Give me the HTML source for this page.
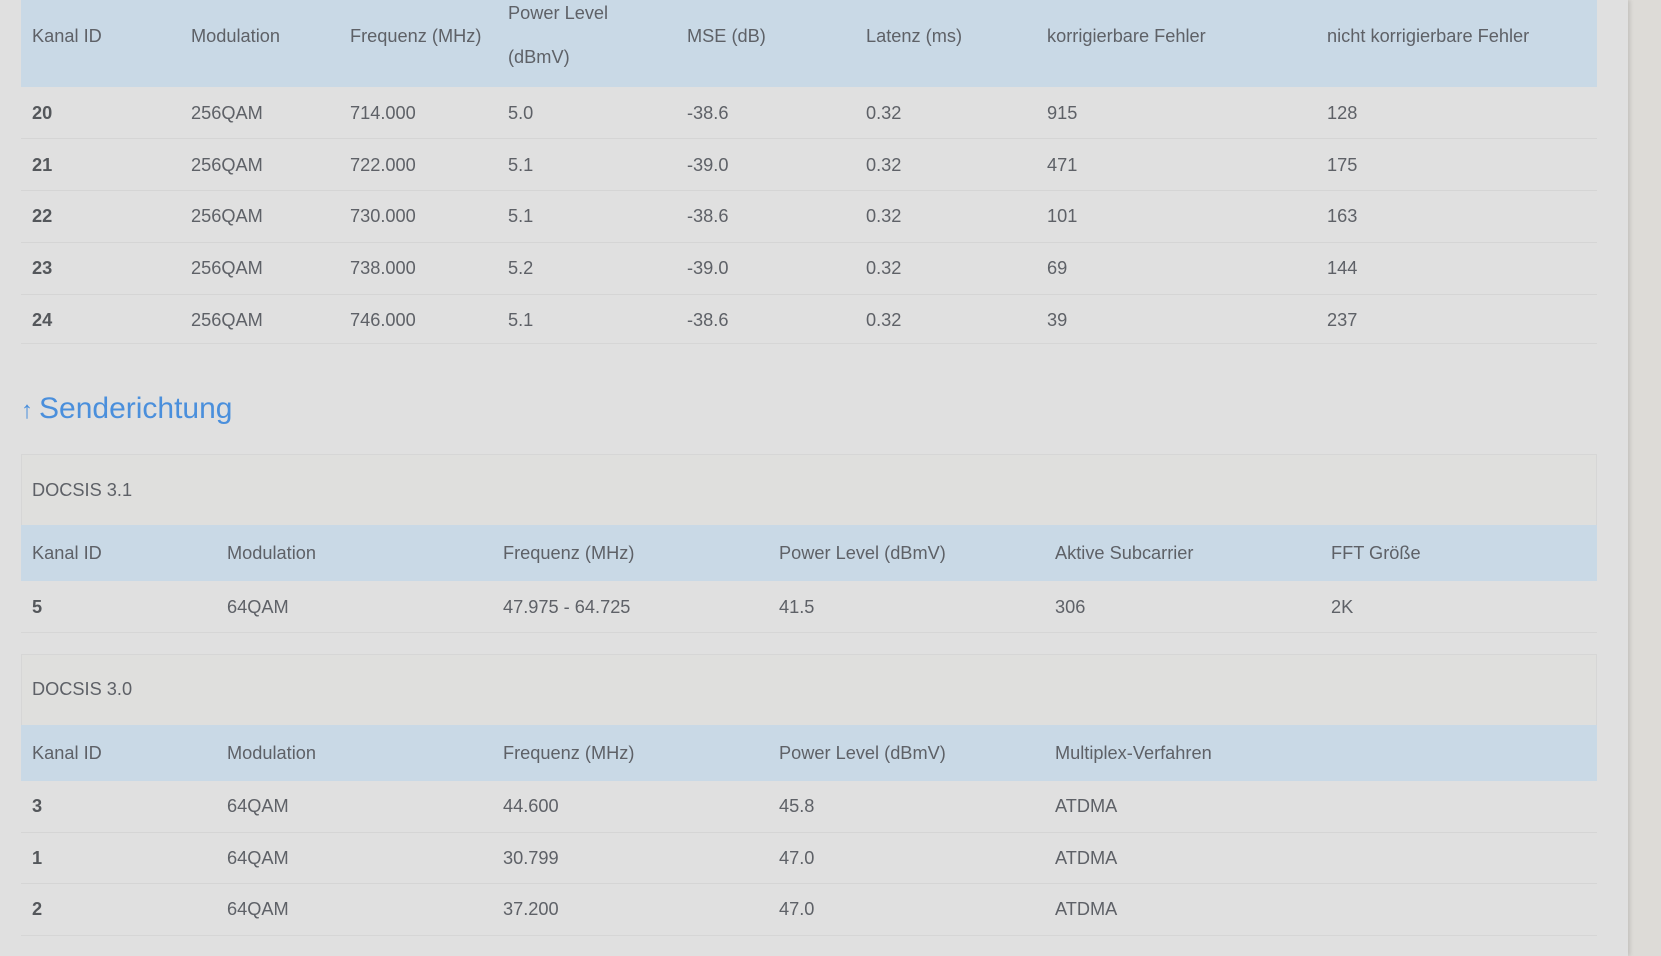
<!DOCTYPE html>
<html><head><meta charset="utf-8"><style>
*{margin:0;padding:0;box-sizing:border-box}
body{width:1661px;height:956px;overflow:hidden;background:#dddbd7;font-family:"Liberation Sans",sans-serif;color:#5e6167;font-size:18.2px;position:relative}
.panel{position:absolute;left:0;top:0;width:1628px;height:956px;background:#e0e0e0;box-shadow:2px 0 4px rgba(0,0,0,.12)}
.a{position:absolute;white-space:nowrap;line-height:20px}
.hd{position:absolute;left:21px;width:1576px;background:#c9d9e6}
.row{position:absolute;left:21px;width:1576px;border-bottom:1px solid #d5d5d5;background:#e0e0e0}
.box{position:absolute;left:21px;width:1576px;border:1px solid #d6d6d6;background:#dfdfdd}
b{font-weight:bold;color:#54575b}
</style></head><body>
<div class="panel"></div>
<div class="box" style="top:-2px;height:346px;background:#e0e0e0"></div>
<div class="hd" style="top:0;height:87px"></div>
<div class="row" style="top:87px;height:52px"></div>
<div class="row" style="top:139px;height:52px"></div>
<div class="row" style="top:191px;height:52px"></div>
<div class="row" style="top:243px;height:52px"></div>
<div class="row" style="top:295px;height:48px;border-bottom:none"></div>

<div class="a" style="left:32px;top:26px">Kanal ID</div>
<div class="a" style="left:191px;top:26px">Modulation</div>
<div class="a" style="left:350px;top:26px">Frequenz (MHz)</div>
<div class="a" style="left:508px;top:3px">Power Level</div>
<div class="a" style="left:508px;top:47px">(dBmV)</div>
<div class="a" style="left:687px;top:26px">MSE (dB)</div>
<div class="a" style="left:866px;top:26px">Latenz (ms)</div>
<div class="a" style="left:1047px;top:26px">korrigierbare Fehler</div>
<div class="a" style="left:1327px;top:26px">nicht korrigierbare Fehler</div>

<div class="a" style="left:32px;top:103px"><b>20</b></div><div class="a" style="left:191px;top:103px">256QAM</div><div class="a" style="left:350px;top:103px">714.000</div><div class="a" style="left:508px;top:103px">5.0</div><div class="a" style="left:687px;top:103px">-38.6</div><div class="a" style="left:866px;top:103px">0.32</div><div class="a" style="left:1047px;top:103px">915</div><div class="a" style="left:1327px;top:103px">128</div>
<div class="a" style="left:32px;top:155px"><b>21</b></div><div class="a" style="left:191px;top:155px">256QAM</div><div class="a" style="left:350px;top:155px">722.000</div><div class="a" style="left:508px;top:155px">5.1</div><div class="a" style="left:687px;top:155px">-39.0</div><div class="a" style="left:866px;top:155px">0.32</div><div class="a" style="left:1047px;top:155px">471</div><div class="a" style="left:1327px;top:155px">175</div>
<div class="a" style="left:32px;top:206px"><b>22</b></div><div class="a" style="left:191px;top:206px">256QAM</div><div class="a" style="left:350px;top:206px">730.000</div><div class="a" style="left:508px;top:206px">5.1</div><div class="a" style="left:687px;top:206px">-38.6</div><div class="a" style="left:866px;top:206px">0.32</div><div class="a" style="left:1047px;top:206px">101</div><div class="a" style="left:1327px;top:206px">163</div>
<div class="a" style="left:32px;top:258px"><b>23</b></div><div class="a" style="left:191px;top:258px">256QAM</div><div class="a" style="left:350px;top:258px">738.000</div><div class="a" style="left:508px;top:258px">5.2</div><div class="a" style="left:687px;top:258px">-39.0</div><div class="a" style="left:866px;top:258px">0.32</div><div class="a" style="left:1047px;top:258px">69</div><div class="a" style="left:1327px;top:258px">144</div>
<div class="a" style="left:32px;top:310px"><b>24</b></div><div class="a" style="left:191px;top:310px">256QAM</div><div class="a" style="left:350px;top:310px">746.000</div><div class="a" style="left:508px;top:310px">5.1</div><div class="a" style="left:687px;top:310px">-38.6</div><div class="a" style="left:866px;top:310px">0.32</div><div class="a" style="left:1047px;top:310px">39</div><div class="a" style="left:1327px;top:310px">237</div>

<div class="a" style="left:21px;top:391px;font-size:30px;line-height:36px;color:#4a8fdc"><span style="font-size:24px;margin-right:6px">↑</span>Senderichtung</div>

<div class="box" style="top:454px;height:179px"></div>
<div class="a" style="left:32px;top:480px">DOCSIS 3.1</div>
<div class="hd" style="top:525px;height:56px"></div>
<div class="a" style="left:32px;top:543px">Kanal ID</div><div class="a" style="left:227px;top:543px">Modulation</div><div class="a" style="left:503px;top:543px">Frequenz (MHz)</div><div class="a" style="left:779px;top:543px">Power Level (dBmV)</div><div class="a" style="left:1055px;top:543px">Aktive Subcarrier</div><div class="a" style="left:1331px;top:543px">FFT Größe</div>
<div class="row" style="top:581px;height:51px;border:none"></div>
<div class="a" style="left:32px;top:597px"><b>5</b></div><div class="a" style="left:227px;top:597px">64QAM</div><div class="a" style="left:503px;top:597px">47.975 - 64.725</div><div class="a" style="left:779px;top:597px">41.5</div><div class="a" style="left:1055px;top:597px">306</div><div class="a" style="left:1331px;top:597px">2K</div>

<div class="box" style="top:654px;height:282px"></div>
<div class="a" style="left:32px;top:679px">DOCSIS 3.0</div>
<div class="hd" style="top:725px;height:56px"></div>
<div class="a" style="left:32px;top:743px">Kanal ID</div><div class="a" style="left:227px;top:743px">Modulation</div><div class="a" style="left:503px;top:743px">Frequenz (MHz)</div><div class="a" style="left:779px;top:743px">Power Level (dBmV)</div><div class="a" style="left:1055px;top:743px">Multiplex-Verfahren</div>
<div class="row" style="top:781px;height:52px"></div>
<div class="row" style="top:833px;height:51px"></div>
<div class="row" style="top:884px;height:51px;border:none"></div>
<div class="a" style="left:32px;top:796px"><b>3</b></div><div class="a" style="left:227px;top:796px">64QAM</div><div class="a" style="left:503px;top:796px">44.600</div><div class="a" style="left:779px;top:796px">45.8</div><div class="a" style="left:1055px;top:796px">ATDMA</div>
<div class="a" style="left:32px;top:848px"><b>1</b></div><div class="a" style="left:227px;top:848px">64QAM</div><div class="a" style="left:503px;top:848px">30.799</div><div class="a" style="left:779px;top:848px">47.0</div><div class="a" style="left:1055px;top:848px">ATDMA</div>
<div class="a" style="left:32px;top:899px"><b>2</b></div><div class="a" style="left:227px;top:899px">64QAM</div><div class="a" style="left:503px;top:899px">37.200</div><div class="a" style="left:779px;top:899px">47.0</div><div class="a" style="left:1055px;top:899px">ATDMA</div>
</body></html>
